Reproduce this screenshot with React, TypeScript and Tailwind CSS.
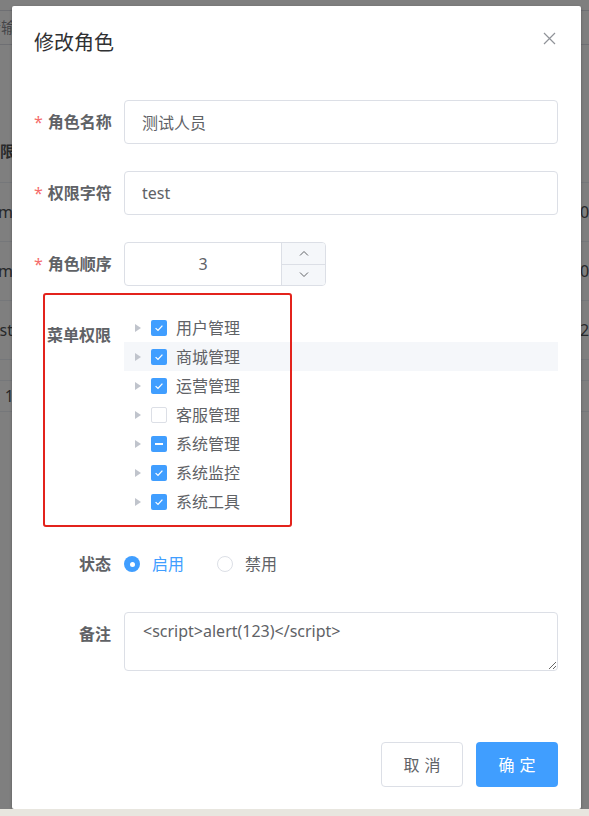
import React from 'react';

const FONT = 'font-[Noto_Sans,Noto_Sans_CJK_SC,sans-serif]';

const menus = [
  { name: '用户管理', state: 'checked' },
  { name: '商城管理', state: 'checked', hover: true },
  { name: '运营管理', state: 'checked' },
  { name: '客服管理', state: 'none' },
  { name: '系统管理', state: 'half' },
  { name: '系统监控', state: 'checked' },
  { name: '系统工具', state: 'checked' },
];

const bgRows = [
  { left: 'adm', right: '0' },
  { left: 'com', right: '0' },
  { left: 'test', right: '2' },
];

function Checkbox({ state }: { state: string }) {
  if (state === 'none') {
    return <span className="w-4 h-4 rounded-[2px] border border-[#dcdfe6] bg-white shrink-0" />;
  }
  return (
    <span className="w-4 h-4 rounded-[2px] bg-[#409eff] flex items-center justify-center shrink-0">
      {state === 'half' ? (
        <span className="w-[8px] h-[2px] bg-white" />
      ) : (
        <svg width="16" height="16" viewBox="0 0 16 16">
          <polyline points="4.6,8.1 7,10.4 11.4,5.6" fill="none" stroke="white" strokeWidth="1.3" />
        </svg>
      )}
    </span>
  );
}

function Label({ text, required }: { text: string; required?: boolean }) {
  return (
    <div className="w-[90px] pr-[13px] shrink-0 text-right leading-[44px] text-[16px] font-bold text-[#606266] whitespace-nowrap">
      {required && <span className="text-[#f56c6c] font-normal mr-[5px]">*</span>}
      {text}
    </div>
  );
}

export default function App() {
  return (
    <div className={`${FONT} w-full min-h-[816px] flex flex-col bg-white`}>
      <div className="relative h-[809px] overflow-hidden">
        {/* page behind the dialog */}
        <div className="text-[15px] text-[#505256]">
          <div className="mt-[10px] h-[35px] border-y border-[#dcdfe6] flex items-center">
            <div className="w-[12px] overflow-hidden flex justify-end whitespace-nowrap text-[#8a8d94]">
              <span className="-mr-[4px]">请输</span>
            </div>
          </div>
          <div className="mt-[75px] h-[63px] border-b border-[#ebeef5] flex items-center">
            <div className="w-[12px] overflow-hidden flex justify-end whitespace-nowrap font-bold">
              <span className="-mr-[3px]">权限</span>
            </div>
          </div>
          {bgRows.map((r) => (
            <div key={r.left} className="h-[59px] border-b border-[#ebeef5] flex items-center justify-between">
              <div className="w-[12px] overflow-hidden flex justify-end whitespace-nowrap text-[16px]">
                <span className="-mr-[1px]">{r.left}</span>
              </div>
              <div className="w-[9px] overflow-hidden whitespace-nowrap text-[16px]">{r.right}0:00</div>
            </div>
          ))}
          <div className="mt-[20px] h-[32px] border-y border-[#ebeef5] flex items-center">
            <div className="w-[12px] overflow-hidden flex justify-end whitespace-nowrap text-[16px]">
              <span className="-mr-[2px]">1</span>
            </div>
          </div>
        </div>

        {/* modal mask */}
        <div className="absolute inset-0 bg-black/50" />

        {/* dialog */}
        <div className="absolute left-[12px] top-[6px] w-[569px] bg-white rounded-[2px] shadow-[0_1px_3px_rgba(0,0,0,0.3)]">
          <div className="relative pt-[23px] pb-[11px] px-[22px]">
            <div className="text-[20px] leading-[27px] text-[#303133]">修改角色</div>
            <svg className="absolute right-[25px] top-[26px]" width="13" height="13" viewBox="0 0 13 13">
              <path d="M1 1L12 12M12 1L1 12" stroke="#909399" strokeWidth="1.2" />
            </svg>
          </div>

          <div className="pl-[22px] pr-[23px] pt-[33px]">
            <div className="flex mb-[27px]">
              <Label text="角色名称" required />
              <input
                readOnly
                defaultValue="测试人员"
                className="flex-1 h-[44px] border border-[#dcdfe6] rounded-[4px] px-[17px] text-[16px] text-[#606266] outline-none"
              />
            </div>
            <div className="flex mb-[27px]">
              <Label text="权限字符" required />
              <input
                readOnly
                defaultValue="test"
                className="flex-1 h-[44px] border border-[#dcdfe6] rounded-[4px] px-[17px] text-[16px] text-[#606266] outline-none"
              />
            </div>
            <div className="flex mb-[27px]">
              <Label text="角色顺序" required />
              <div className="w-[202px] h-[44px] border border-[#dcdfe6] rounded-[4px] flex overflow-hidden">
                <div className="flex-1 flex items-center justify-center text-[16px] text-[#606266]">3</div>
                <div className="w-[44px] border-l border-[#dcdfe6] bg-[#f5f7fa] flex flex-col">
                  <div className="flex-1 flex items-center justify-center border-b border-[#dcdfe6]">
                    <svg width="10" height="6" viewBox="0 0 10 6">
                      <polyline points="1,5.5 5,1.5 9,5.5" fill="none" stroke="#606266" strokeWidth="1" />
                    </svg>
                  </div>
                  <div className="flex-1 flex items-center justify-center">
                    <svg width="10" height="6" viewBox="0 0 10 6">
                      <polyline points="1,0.5 5,4.5 9,0.5" fill="none" stroke="#606266" strokeWidth="1" />
                    </svg>
                  </div>
                </div>
              </div>
            </div>

            <div className="relative flex mb-[26px]">
              <Label text="菜单权限" />
              <div className="flex-1 flex flex-col">
                {menus.map((m) => (
                  <div key={m.name} className={`h-[29px] flex items-center ${m.hover ? 'bg-[#f5f7fa]' : ''}`}>
                    <span className="w-[27px] flex justify-center">
                      <span className="w-0 h-0 border-y-[4px] border-y-transparent border-l-[6px] border-l-[#c0c4cc] ml-[1px]" />
                    </span>
                    <Checkbox state={m.state} />
                    <span className="ml-[9px] text-[16px] text-[#606266]">{m.name}</span>
                  </div>
                ))}
              </div>
              {/* red annotation frame */}
              <div className="absolute left-[9px] top-[-20px] w-[249px] h-[234px] border-[2.5px] border-[#e3231c] rounded-[3px] pointer-events-none" />
            </div>

            <div className="flex mb-[26px]">
              <Label text="状态" />
              <div className="flex items-center h-[44px] text-[16px]">
                <span className="w-4 h-4 rounded-full bg-[#409eff] flex items-center justify-center">
                  <span className="w-[5px] h-[5px] rounded-full bg-white" />
                </span>
                <span className="ml-[12px] text-[#409eff]">启用</span>
                <span className="ml-[33px] w-4 h-4 rounded-full border border-[#dcdfe6] bg-white" />
                <span className="ml-[12px] text-[#606266]">禁用</span>
              </div>
            </div>

            <div className="flex">
              <Label text="备注" />
              <textarea
                readOnly
                defaultValue="<script>alert(123)</script>"
                className="flex-1 h-[59px] border border-[#dcdfe6] rounded-[4px] px-[18px] py-[5px] leading-[26px] text-[16px] text-[#606266] outline-none"
              />
            </div>
          </div>

          <div className="flex justify-end gap-[13px] pl-[22px] pr-[23px] pt-[71px] pb-[22px]">
            <button className="w-[82px] h-[45px] rounded-[4px] border border-[#dcdfe6] bg-white text-[16px] text-[#606266] tracking-[5px] pl-[5px]">
              取消
            </button>
            <button className="w-[82px] h-[45px] rounded-[4px] bg-[#409eff] text-[16px] text-white tracking-[5px] pl-[5px]">
              确定
            </button>
          </div>
        </div>
      </div>
      <div className="h-[7px] bg-[#e8e6df]" />
    </div>
  );
}
